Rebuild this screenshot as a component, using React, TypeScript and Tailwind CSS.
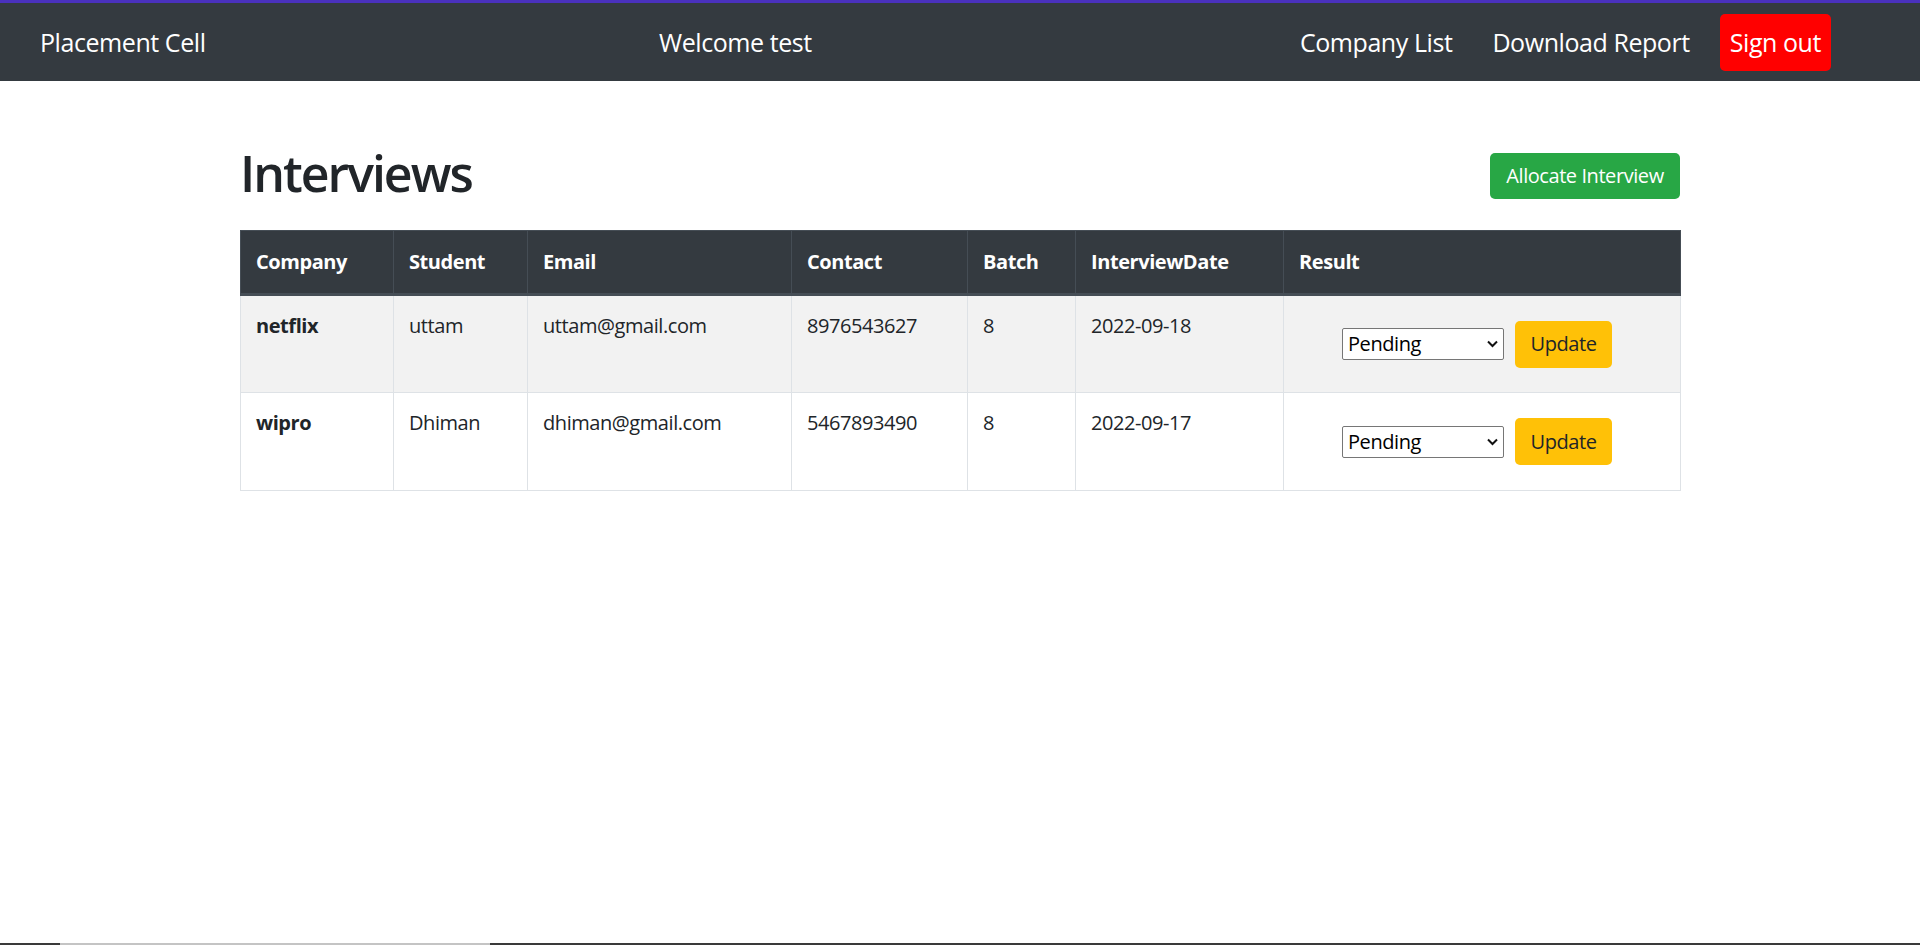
import React from "react";

const font = { fontFamily: '"Segoe UI", "Open Sans", "Noto Sans", sans-serif' };

type Row = {
  company: string;
  student: string;
  email: string;
  contact: string;
  batch: string;
  date: string;
};

const rows: Row[] = [
  { company: "netflix", student: "uttam", email: "uttam@gmail.com", contact: "8976543627", batch: "8", date: "2022-09-18" },
  { company: "wipro", student: "Dhiman", email: "dhiman@gmail.com", contact: "5467893490", batch: "8", date: "2022-09-17" },
];

function Chevron() {
  return (
    <svg width="11" height="8" viewBox="0 0 11 8" className="pointer-events-none absolute right-[6px] top-[12px]">
      <path d="M1 1.5 L5.5 6 L10 1.5" fill="none" stroke="#111" strokeWidth="2" />
    </svg>
  );
}

export default function App() {
  return (
    <div className="flex h-[945px] flex-col bg-white tracking-[-0.027em] text-[#212529]" style={font}>
      <nav className="box-border flex h-[81px] items-center border-t-[3px] border-[#4a31bd] bg-[#343a40] pl-[40px] pr-[89px] text-[25px] leading-[37px] text-white">
        <div className="w-[619px]">Placement Cell</div>
        <div>Welcome test</div>
        <div className="ml-auto flex items-center gap-[20px]">
          <a className="px-[10px] py-[10px]">Company List</a>
          <a className="px-[10px] py-[10px]">Download Report</a>
          <a className="rounded-[5px] bg-[#ff0000] px-[10px] py-[10px]">Sign out</a>
        </div>
      </nav>

      <main className="flex-1">
        <div className="mx-auto w-[1440px]">
          <div className="mt-[62px] flex h-[60px] items-center justify-between">
            <h1 className="text-[50px] font-[550] leading-[60px] tracking-[-0.04em] text-[#212529]">Interviews</h1>
            <button className="mt-[5px] h-[46px] w-[190px] rounded-[5px] bg-[#28a745] text-[20px] leading-[30px] text-white">
              Allocate Interview
            </button>
          </div>

          <table className="mt-[27px] w-[1440px] table-fixed border-collapse text-left text-[20px] leading-[30px]">
            <colgroup>
              <col className="w-[153px]" />
              <col className="w-[134px]" />
              <col className="w-[264px]" />
              <col className="w-[176px]" />
              <col className="w-[108px]" />
              <col className="w-[208px]" />
              <col className="w-[397px]" />
            </colgroup>
            <thead>
              <tr className="bg-[#343a40] text-white">
                {["Company", "Student", "Email", "Contact", "Batch", "InterviewDate", "Result"].map((h) => (
                  <th
                    key={h}
                    className="h-[64px] border border-b-[3px] border-[#454d55] px-[15px] align-middle font-bold"
                  >
                    {h}
                  </th>
                ))}
              </tr>
            </thead>
            <tbody>
              {rows.map((r, i) => (
                <tr key={r.company} className={i === 0 ? "bg-[#f2f2f2]" : "bg-white"}>
                  <td className="h-[98px] border border-[#dee2e6] px-[15px] pt-[15px] align-top font-bold">{r.company}</td>
                  <td className="border border-[#dee2e6] px-[15px] pt-[15px] align-top">{r.student}</td>
                  <td className="border border-[#dee2e6] px-[15px] pt-[15px] align-top">{r.email}</td>
                  <td className="border border-[#dee2e6] px-[15px] pt-[15px] align-top">{r.contact}</td>
                  <td className="border border-[#dee2e6] px-[15px] pt-[15px] align-top">{r.batch}</td>
                  <td className="border border-[#dee2e6] px-[15px] pt-[15px] align-top">{r.date}</td>
                  <td className="border border-[#dee2e6] px-[15px] align-middle">
                    <div className="flex items-center justify-center gap-[11px] pr-[10px]">
                      <div className="relative h-[32px] w-[162px]">
                        <select
                          defaultValue="Pending"
                          className="h-[32px] w-[162px] appearance-none rounded-[2px] border border-[#767676] bg-white pl-[5px] text-[20px] leading-[28px] text-black"
                        >
                          <option>Pending</option>
                          <option>Pass</option>
                          <option>Fail</option>
                          <option>On Hold</option>
                          <option>Didn't Attempt</option>
                        </select>
                        <Chevron />
                      </div>
                      <button className="h-[47px] w-[97px] rounded-[5px] bg-[#ffc107] text-[20px] leading-[30px] text-[#212529]">
                        Update
                      </button>
                    </div>
                  </td>
                </tr>
              ))}
            </tbody>
          </table>
        </div>
      </main>

      <div className="flex h-[2px] w-full">
        <div className="w-[60px] bg-[#3a3a3a]" />
        <div className="w-[430px] bg-[#c4c4c4]" />
        <div className="flex-1 bg-[#3a3a3a]" />
      </div>
    </div>
  );
}
